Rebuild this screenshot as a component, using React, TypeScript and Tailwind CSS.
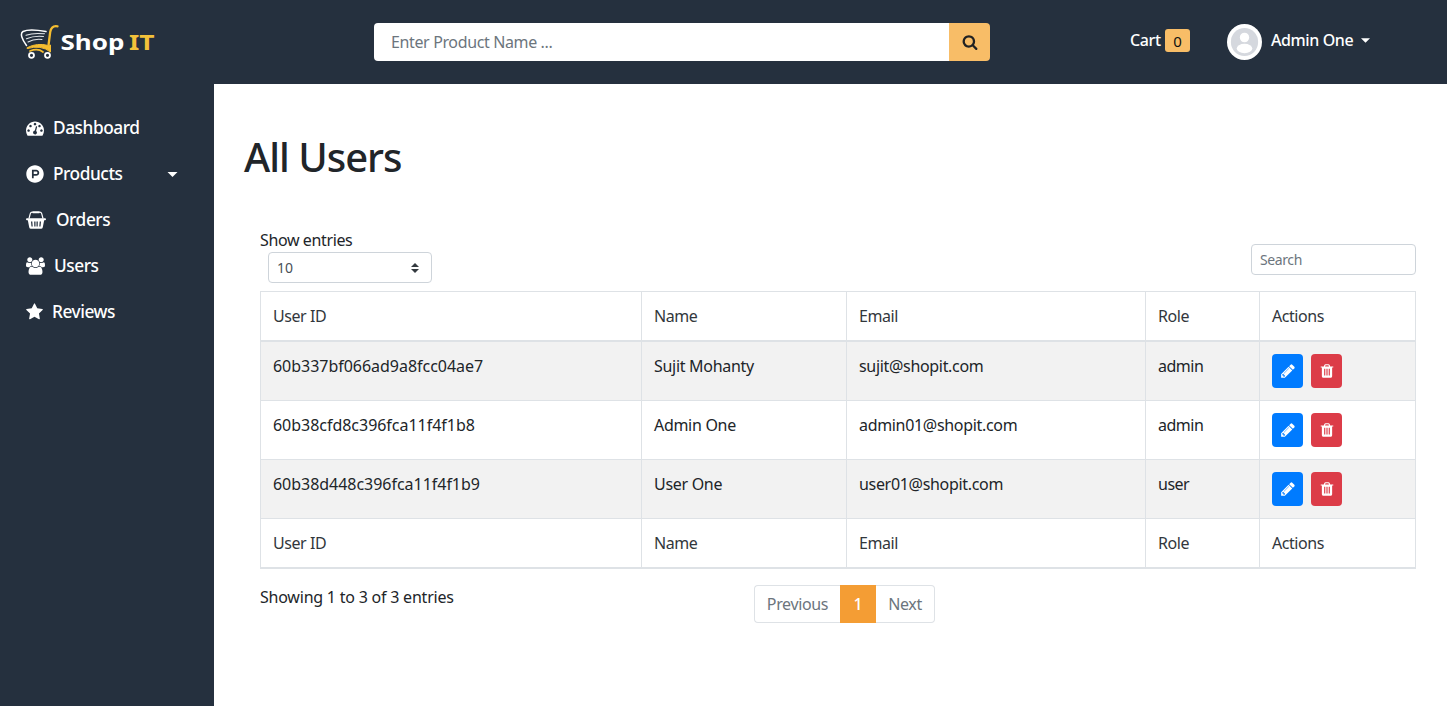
import React from "react";
import { FaProductHunt } from "react-icons/fa";

const paths = {
  dash: "M384 1152q0-53-37.500-90.500t-90.500-37.500-90.500 37.500-37.500 90.500 37.500 90.500 90.500 37.500 90.500-37.500 37.500-90.500zm192-448q0-53-37.500-90.500t-90.500-37.500-90.500 37.500-37.500 90.500 37.500 90.500 90.500 37.500 90.500-37.500 37.500-90.500zm428 481l101-382q6-26-7.500-48.500t-38.500-29.500-48 6.500-30 39.500l-101 382q-60 5-107 43.500t-63 98.500q-20 77 20 146t117 89 146-20 89-117q16-60-6-117t-72-91zm660-33q0-53-37.500-90.500t-90.500-37.500-90.500 37.500-37.500 90.500 37.500 90.500 90.500 37.500 90.500-37.500 37.500-90.500zm-640-640q0-53-37.500-90.500t-90.500-37.500-90.500 37.500-37.500 90.500 37.500 90.500 90.500 37.500 90.500-37.500 37.500-90.500zm448 192q0-53-37.500-90.500t-90.500-37.500-90.500 37.500-37.500 90.500 37.500 90.500 90.500 37.500 90.500-37.500 37.500-90.500zm320 448q0 261-141 483-19 29-54 29h-1402q-35 0-54-29-141-221-141-483 0-182 71-348t191-286 286-191 348-71 348 71 286 191 191 286 71 348z",
  users: "M593 896q-162 5-265 128h-134q-82 0-138-40.500t-56-118.500q0-353 124-353 6 0 43.500 21t97.500 42.500 119 21.500q67 0 133-23-5 37-5 66 0 139 81 256zm1071 637q0 120-73 189.500t-194 69.500h-874q-121 0-194-69.500t-73-189.500q0-53 3.500-103.500t14-109 26.500-108.500 43-97.500 62-81 85.500-53.500 111.500-20q10 0 43 21.500t73 48 107 48 135 21.500 135-21.500 107-48 73-48 43-21.500q61 0 111.500 20t85.500 53.500 62 81 43 97.500 26.500 108.500 14 109 3.500 103.500zm-1024-1277q0 106-75 181t-181 75-181-75-75-181 75-181 181-75 181 75 75 181zm704 384q0 159-112.500 271.500t-271.500 112.500-271.500-112.500-112.500-271.500 112.500-271.500 271.500-112.500 271.500 112.500 112.500 271.500zm576 225q0 78-56 118.500t-138 40.500h-134q-103-123-265-128 81-117 81-256 0-29-5-66 66 23 133 23 59 0 119-21.500t97.500-42.500 43.500-21q124 0 124 353zm-128-609q0 106-75 181t-181 75-181-75-75-181 75-181 181-75 181 75 75 181z",
  star: "M1728 647q0 22-26 48l-363 354 86 500q1 7 1 20 0 21-10.500 35.500t-30.500 14.500q-19 0-40-12l-449-236-449 236q-22 12-40 12-21 0-31.500-14.500t-10.500-35.500q0-6 2-20l86-500-364-354q-25-27-25-48 0-37 56-46l502-73 225-455q19-41 49-41t49 41l225 455 502 73q56 9 56 46z",
  search: "M1216 832q0-185-131.500-316.500t-316.500-131.500-316.500 131.500-131.500 316.500 131.500 316.500 316.500 131.500 316.500-131.500 131.500-316.500zm512 832q0 52-38 90t-90 38q-54 0-90-38l-343-342q-179 124-399 124-143 0-273.500-55.500t-225-150-150-225-55.500-273.500 55.500-273.500 150-225 225-150 273.500-55.500 273.500 55.500 225 150 150 225 55.500 273.500q0 220-124 399l343 343q37 37 37 90z",
  pencil: "M491 1536l91-91-235-235-91 91v107h128v128h107zm523-928q0-22-22-22-10 0-17 7l-542 542q-7 7-7 17 0 22 22 22 10 0 17-7l542-542q7-7 7-17zm-54-192l416 416-832 832h-416v-416zm683 96q0 53-37 90l-166 166-416-416 166-165q36-38 90-38 53 0 91 38l235 234q37 39 37 91z",
  trash: "M704 1376v-704q0-14-9-23t-23-9h-64q-14 0-23 9t-9 23v704q0 14 9 23t23 9h64q14 0 23-9t9-23zm256 0v-704q0-14-9-23t-23-9h-64q-14 0-23 9t-9 23v704q0 14 9 23t23 9h64q14 0 23-9t9-23zm256 0v-704q0-14-9-23t-23-9h-64q-14 0-23 9t-9 23v704q0 14 9 23t23 9h64q14 0 23-9t9-23zm-544-992h448l-48-117q-7-9-17-11h-317q-10 2-17 11zm928 32v64q0 14-9 23t-23 9h-96v948q0 83-47 143.500t-113 60.500h-832q-66 0-113-58.500t-47-141.500v-952h-96q-14 0-23-9t-9-23v-64q0-14 9-23t23-9h309l70-167q15-37 54-63t79-26h320q40 0 79 26t54 63l70 167h309q14 0 23 9t9 23z",
};

function Icon({ d, box = "0 0 1792 1792", className }: { d: string; box?: string; className: string }) {
  return (
    <svg viewBox={box} fill="currentColor" className={`shrink-0 ${className}`}>
      <path d={d} />
    </svg>
  );
}

function Caret({ className }: { className: string }) {
  return (
    <svg viewBox="0 0 10 5" fill="currentColor" className={className}>
      <path d="M0 0h10L5 5z" />
    </svg>
  );
}

function Basket() {
  return (
    <svg viewBox="0 0 20 18" className="h-[18px] w-5 shrink-0" fill="none" stroke="currentColor">
      <path d="M3 7.500 4.300 2.600Q4.700 1.200 6.200 1.200M17 7.500 15.700 2.600Q15.300 1.200 13.800 1.200" strokeWidth="1.200" />
      <path d="M7 1.200h6" strokeWidth="2" strokeLinecap="round" />
      <path d="M1 8.200h18" strokeWidth="2" strokeLinecap="round" />
      <path fillRule="evenodd" stroke="none" fill="currentColor" d="M1.800 9h16.400l-1.400 7.300q-.300 1.500-1.800 1.500H5q-1.500 0-1.800-1.500zM5 10.500l.500 5h1.200l-.400-5zM8.200 10.500l.100 5h1.200v-5zM10.500 10.500v5h1.200l.100-5zM13.700 10.500l-.400 5h1.200l.500-5z" />
    </svg>
  );
}

function Logo() {
  return (
    <div className="flex items-start text-white">
      <svg viewBox="0 0 40 36" className="h-9 w-10 shrink-0" fill="none" strokeLinecap="round">
        <path d="M26 7.500Q9 4.500 3 7.500C-.500 9.500 2.500 16 6.500 21.500" stroke="#fff" strokeWidth="1.500" />
        <path d="M6 11.300Q13 8.600 24.500 9.800M6.500 14.800Q14 11.500 23.500 12.500M8 18Q14 14.600 22 15.500" stroke="#e4e7ea" strokeWidth="1.100" />
        <path d="M37.500 2.300Q31.500 1.200 30.200 8L28.600 20.500" stroke="#f5bd30" strokeWidth="2.300" />
        <path d="M7.500 23.500Q17 18.500 28.500 21.500L30.500 21V28Q21 20.500 7.500 24.500z" fill="#f5bd30" stroke="#f5bd30" strokeWidth="1" />
        <path d="M10 27Q18 24 23 28" stroke="#f5bd30" strokeWidth="1.800" />
        <circle cx="11.500" cy="31.300" r="2.500" stroke="#fff" strokeWidth="1.800" />
        <circle cx="27.500" cy="31.300" r="2.500" stroke="#fff" strokeWidth="1.800" />
      </svg>
      <svg viewBox="0 0 96 28" className="mt-[5px] h-7 w-24 font-['Noto_Sans'] text-[21px] font-bold">
        <text x="0.500" y="21" fill="#fff" textLength="64" lengthAdjust="spacingAndGlyphs">Shop</text>
        <text x="69" y="21" fill="#f3c13a" textLength="25.500" lengthAdjust="spacingAndGlyphs">IT</text>
      </svg>
    </div>
  );
}

const nav = [
  { label: "Dashboard", gap: "gap-[9px]", icon: <Icon d={paths.dash} className="size-[18px]" /> },
  { label: "Products", gap: "gap-[9px]", icon: <FaProductHunt className="size-[18px] shrink-0" />, caret: true },
  { label: "Orders", gap: "gap-[10px]", icon: <Basket /> },
  { label: "Users", gap: "gap-[9px]", icon: <Icon d={paths.users} box="0 0 1920 1792" className="h-[18px] w-[19px]" /> },
  { label: "Reviews", gap: "gap-[9px]", icon: <Icon d={paths.star} box="64 0 1664 1792" className="h-[18px] w-[17px]" /> },
];

const users = [
  ["60b337bf066ad9a8fcc04ae7", "Sujit Mohanty", "sujit@shopit.com", "admin"],
  ["60b38cfd8c396fca11f4f1b8", "Admin One", "admin01@shopit.com", "admin"],
  ["60b38d448c396fca11f4f1b9", "User One", "user01@shopit.com", "user"],
];
const tracking = ["tracking-[-0.030px]", "tracking-[-0.300px]", "tracking-[-0.320px]", "tracking-[-0.500px]"];
const columns = ["User ID", "Name", "Email", "Role", "Actions"];

function Labels() {
  return (
    <tr className="h-[50px]">
      {columns.map((c) => (
        <th key={c} className="border-r border-b-2 border-[#dee2e6] px-3 text-left align-middle font-[450] tracking-[-0.450px] text-[#32373c]">
          {c}
        </th>
      ))}
    </tr>
  );
}

export default function App() {
  return (
    <div className="flex h-[706px] w-[1447px] flex-col overflow-hidden bg-white font-['Noto_Sans',sans-serif] text-[16px] leading-6 font-[450] text-[#212529]">
      <header className="flex h-[84px] shrink-0 items-start bg-[#25303e] text-white">
        <div className="w-[374px] pt-6 pl-5"><Logo /></div>
        <div className="mt-[23px] flex h-[38px] w-[616px] overflow-hidden rounded">
          <div className="flex flex-1 items-center bg-white pl-[17px] text-[#6c757d] tracking-[-0.370px]">Enter Product Name ...</div>
          <button className="flex w-[41px] items-center justify-center bg-[#f8bd67] text-[#222]">
            <Icon d={paths.search} className="size-4" />
          </button>
        </div>
        <div className="mt-[28px] ml-[140px] flex h-6 items-center font-medium">
          <span className="w-[35px] tracking-[-0.400px]">Cart</span>
          <span className="mt-px flex h-[23px] w-[25px] items-center justify-center rounded-[3px] bg-[#f8bd67] text-[15px] font-normal text-[#111]">0</span>
        </div>
        <div className="mt-6 ml-[37px] flex h-9 items-center">
          <svg viewBox="0 0 36 36" className="h-9 w-[35px]" preserveAspectRatio="none">
            <circle cx="18" cy="18" r="18" fill="#fff" />
            <circle cx="18" cy="18" r="14" fill="#d5d8de" />
            <circle cx="18" cy="13.500" r="4.800" fill="#fff" />
            <ellipse cx="18" cy="24.500" rx="8" ry="4.700" fill="#fff" />
          </svg>
          <span className="-mt-1 ml-[9px] w-[90px] font-medium whitespace-nowrap tracking-[-0.400px]">Admin One</span>
          <Caret className="-mt-1 h-[5px] w-[9px]" />
        </div>
      </header>
      <div className="flex flex-1">
        <aside className="w-[214px] shrink-0 bg-[#25303e] pt-[21px] text-white">
          {nav.map((n) => (
            <a key={n.label} className={`flex h-[46px] items-center pl-[26px] text-[17.300px] font-medium tracking-[-0.450px] ${n.gap}`}>
              {n.icon}
              <span className="-mt-px">{n.label}</span>
              {n.caret && <Caret className="mr-9 ml-auto h-[5px] w-[11px]" />}
            </a>
          ))}
        </aside>
        <main className="flex-1 pl-[30px]">
          <h1 className="mt-[49px] h-12 text-[40px] leading-[48px] font-medium tracking-[-1px]">All Users</h1>
          <div className="mt-[47px] ml-4 w-[1156px]">
            <div className="flex h-[63px] justify-between">
              <div>
                <div className="h-6 tracking-[-0.380px]">Show entries</div>
                <div className="ml-2 flex h-[31px] w-[164px] items-center justify-between rounded border border-[#ced4da] pr-3 pl-2 text-[14px] text-[#495057]">
                  <span>10</span>
                  <svg viewBox="0 0 4 5" className="h-[10px] w-2" fill="#343a40"><path d="M2 0 0 2h4zm0 5L0 3h4z" /></svg>
                </div>
              </div>
              <div className="mt-4 flex h-[31px] w-[165px] items-center rounded border border-[#ced4da] pl-2 text-[14px] tracking-[-0.400px] text-[#6c757d]">Search</div>
            </div>
            <table className="w-[1156px] table-fixed border-separate border-spacing-0 border-t border-l border-[#dee2e6]">
              <colgroup>
                <col className="w-[381px]" /><col className="w-[205px]" /><col className="w-[299px]" /><col className="w-[114px]" /><col className="w-[156px]" />
              </colgroup>
              <thead><Labels /></thead>
              <tbody>
                {users.map((u) => (
                  <tr key={u[0]} className="h-[59px] odd:bg-[#f2f2f2]">
                    {u.map((v, i) => (
                      <td key={i} className={`border-r border-b border-[#dee2e6] px-3 pt-3 align-top ${tracking[i]}`}>{v}</td>
                    ))}
                    <td className="border-r border-b border-[#dee2e6] px-3 pt-3 align-top">
                      <div className="flex gap-2 text-white">
                        <button className="flex h-[34px] w-[31px] items-center justify-center rounded bg-[#007bff]"><Icon d={paths.pencil} className="size-4" /></button>
                        <button className="flex h-[34px] w-[31px] items-center justify-center rounded bg-[#dc3c48]"><Icon d={paths.trash} className="size-4" /></button>
                      </div>
                    </td>
                  </tr>
                ))}
              </tbody>
              <tfoot><Labels /></tfoot>
            </table>
            <div className="flex pt-4">
              <div className="w-[494px] tracking-[-0.220px]">Showing 1 to 3 of 3 entries</div>
              <div className="flex h-[38px] items-stretch tracking-[-0.350px] text-[#6c757d]">
                <span className="flex w-[86px] items-center justify-center rounded-l border border-r-0 border-[#dee2e6]">Previous</span>
                <span className="flex w-9 items-center justify-center bg-[#f49d34] font-medium text-white">1</span>
                <span className="flex w-[59px] items-center justify-center rounded-r border border-l-0 border-[#dee2e6]">Next</span>
              </div>
            </div>
          </div>
        </main>
      </div>
    </div>
  );
}
